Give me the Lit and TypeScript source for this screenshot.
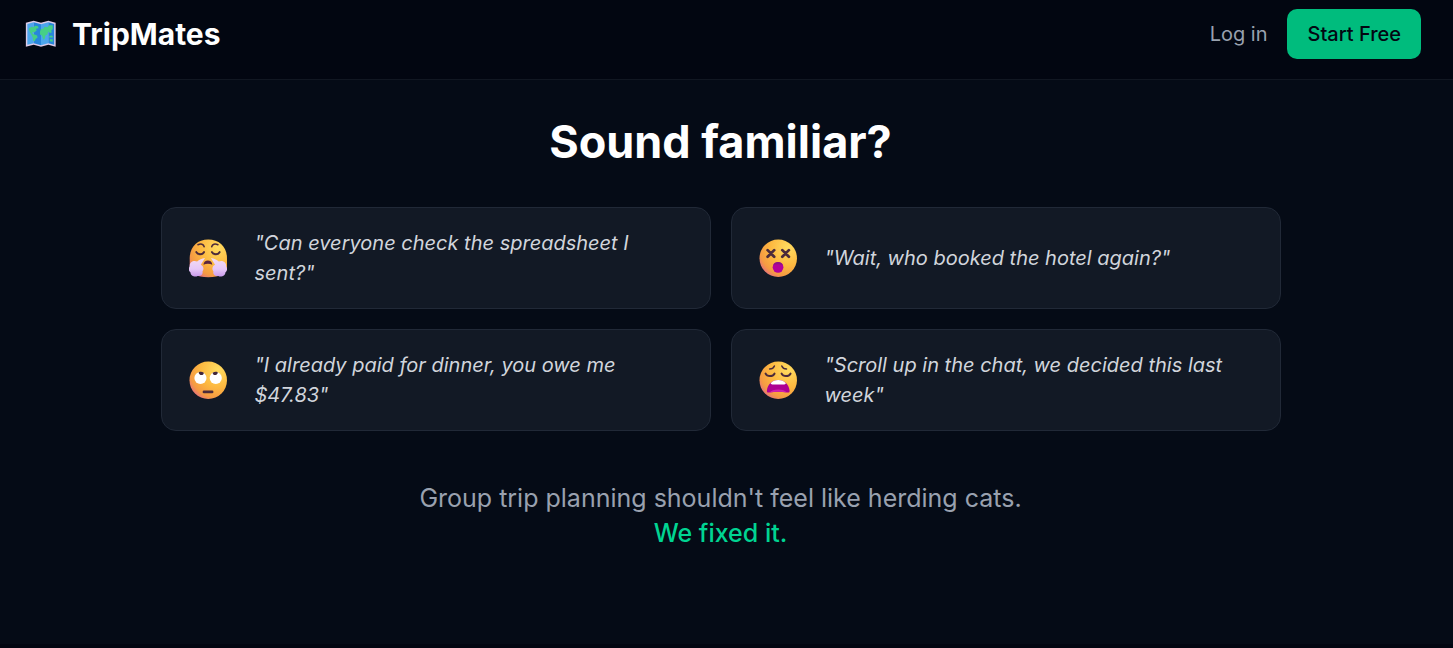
import { LitElement, html, css, svg } from "lit";
import { customElement, property } from "lit/decorators.js";

const faces = {
  huff: svg`
    <path d="M.7 19C.7 8 8 .5 19 .5S37.500 8 37.500 19v9c0 6.500-7 9.700-18.500 9.700S.7 34.500.7 28z" fill="url(#skin)"/>
    <path d="M8.800 5.700c3-1.300 5.500-.7 6.200 2M28.600 5.700c-3-1.300-5.500-.7-6.200 2" class="brow"/>
    <path d="M7.200 13c1.300 2.700 6 2.700 7.600 0M22.600 13c1.300 2.700 6 2.700 7.600 0" class="line"/>
    <path d="M14.300 25.500c0-5.600 8.700-5.600 8.700 0-2.500-1.500-6-1.500-8.700 0z" fill="#5b2540"/>
    <path d="M15.800 18.700c-3 .3-5.800 1.500-7.800 3.600C4.500 20.500.3 23 .7 27c-1.500 2.500-1 5 .8 6 0 3.500 4.500 5 7 3.500 3.500.5 5.500-2 4.800-4.500 2-2.500.7-5.500-1.600-6.500z" fill="url(#puff)"/>
    <path d="M21.600 18.700c3 .3 5.800 1.500 7.800 3.600 3.500-1.800 7.700.7 7.300 4.700 1.500 2.500 1 5-.8 6 0 3.500-4.500 5-7 3.500-3.500.5-5.500-2-4.800-4.500-2-2.500-.7-5.500 1.600-6.500z" fill="url(#puff)"/>`,
  dizzy: svg`
    <circle cx="19" cy="19" r="18.500" fill="url(#skin)"/>
    <path d="m8.500 11 6.500 6.500m0-6.500-6.500 6.500M23 11l6.500 6.500m0-6.500L23 17.500" class="cross"/>
    <circle cx="18.800" cy="28" r="5.300" fill="#b4009a"/>
    <path d="M14 26c1-4.300 8.600-4.300 9.600 0-3-1.300-6.600-1.300-9.600 0z" fill="#8d1188"/>`,
  roll: svg`
    <circle cx="19" cy="19" r="18.500" fill="url(#skin)"/>
    <circle cx="11.300" cy="16.800" r="6" fill="#fff"/>
    <circle cx="26.400" cy="16.800" r="6" fill="#fff"/>
    <path d="M9.600 11c1.800-.7 3.500-.5 5 .5.200 3.200-5.200 3-5-.5zM23.400 11.500c1.500-1 3.200-1.200 5-.5.200 3.500-5.200 3.700-5 .5z" fill="#41263c"/>
    <path d="M14.800 30.500h8" class="cross"/>`,
  weary: svg`
    <circle cx="19" cy="19" r="18.500" fill="url(#skin)"/>
    <path d="M10.500 8c2.200 0 3.900-1 4.700-3M22.500 5c.8 2 2.500 3 4.700 3" class="brow"/>
    <path d="M6.500 12.500c1.500 3.200 7 3.200 8.800 0M22.300 12.500c1.500 3.200 7 3.200 8.800 0" class="line"/>
    <path d="M7.800 29c.7-6 5-10.200 11.200-10.200S29.500 23 30.200 29c.2 1.700-.7 2.400-2 2.100-6-1-12.500-1-18.400 0-1.300.3-2.200-.4-2-2.100z" fill="#ad0092"/>
    <path d="M11.500 22c3.500-4.200 11.500-4.200 15 0-.5 1-1.300 1.300-2.300 1.300H13.800c-1 0-1.800-.3-2.300-1.300z" fill="#fff"/>
    <path d="M10.500 31c2.500-3.800 14.500-3.800 17 0-5.500-1-11.500-1-17 0z" fill="#cf1fb0"/>`,
};

@customElement("mood-face")
class MoodFace extends LitElement {
  @property() mood: keyof typeof faces = "huff";

  static styles = css`
    :host { display: flex; justify-content: center; width: 53px; flex: none; }
    svg { display: block; width: 39px; height: 39px; }
    .line, .brow, .cross { fill: none; stroke: #4c2b3b; stroke-linecap: round; }
    .line { stroke-width: 2; }
    .brow { stroke-width: 1.500; }
    .cross { stroke-width: 2.700; }
  `;

  render() {
    return html`<svg viewBox="0 0 38.500 38.500" aria-hidden="true">
      <defs>
        <radialGradient id="skin" cx=".76" cy=".22" r=".95">
          <stop offset="0" stop-color="#ffdc60"/>
          <stop offset=".5" stop-color="#fdb840"/>
          <stop offset=".8" stop-color="#f59a43"/>
          <stop offset="1" stop-color="#e0638f"/>
        </radialGradient>
        <linearGradient id="puff" x1="0" y1="0" x2="0" y2="1">
          <stop offset="0" stop-color="#f3dcf3"/>
          <stop offset=".6" stop-color="#e6c8f8"/>
          <stop offset="1" stop-color="#c99aeb"/>
        </linearGradient>
      </defs>
      ${faces[this.mood]}
    </svg>`;
  }
}

@customElement("app-root")
class AppRoot extends LitElement {
  private quotes = [
    { mood: "huff", text: "Can everyone check the spreadsheet I sent?" },
    { mood: "dizzy", text: "Wait, who booked the hotel again?" },
    { mood: "roll", text: "I already paid for dinner, you owe me $47.83" },
    { mood: "weary", text: "Scroll up in the chat, we decided this last week" },
  ];

  static styles = css`
    :host {
      display: flex;
      flex-direction: column;
      min-height: 100vh;
      background: #020611;
      color: #fff;
      font-family: Inter, "Liberation Sans", sans-serif;
      font-size: 20px;
      line-height: 30px;
    }
    * { box-sizing: border-box; margin: 0; }
    .bar {
      display: flex;
      align-items: center;
      justify-content: space-between;
      padding: 9px 32px 20px 20px;
      border-bottom: 1px solid #111722;
    }
    .brand { display: flex; align-items: center; gap: 10px; }
    .map { display: block; width: 42px; height: 28px; }
    .name { font-size: 30px; line-height: 40px; font-weight: 700; }
    .actions { display: flex; align-items: center; gap: 20px; }
    .login { color: #99a1af; text-decoration: none; }
    .start {
      padding: 10px 20px;
      border: 0;
      border-radius: 10px;
      background: #00bc7d;
      color: #030712;
      font: inherit;
      font-weight: 500;
    }
    .familiar {
      flex: 1;
      margin-bottom: 4px;
      padding: 37px 32px 0 20px;
      background: #050b16;
      text-align: center;
    }
    .title { font-size: 45px; line-height: 50px; font-weight: 700; }
    .quotes {
      display: grid;
      grid-template-columns: 1fr 1fr;
      gap: 20px;
      max-width: 1120px;
      margin: 40px auto 50px;
      padding: 0;
      list-style: none;
      text-align: left;
    }
    .quote {
      display: flex;
      align-items: center;
      gap: 20px;
      padding: 20px;
      border: 1px solid #212937;
      border-radius: 15px;
      background: #121925;
    }
    .words { color: #d1d5dc; font-style: oblique 14deg; }
    .closing { color: #99a1af; font-size: 25px; line-height: 35px; }
    .fixed { color: #00d492; font-weight: 500; }
  `;

  render() {
    return html`
      <header class="bar">
        <div class="brand">
          <svg class="map" viewBox="0 0 43 28" aria-hidden="true">
            <path d="M6 2.500 14 .5l7.500 2 7.500-2 7.500 2V27l-7.500-2-7.500 2-7.500-2L6 27z" fill="#dccbe8"/>
            <path d="m7.500 3.700 6.500-1.700v21.500l-6.500 1.600z" fill="#4ca6ed"/>
            <path d="m14 2 7.500 2v21.400L14 23.500z" fill="#2786dc"/>
            <path d="m21.500 4 7.500-2v21.500l-7.500 1.900z" fill="#4ca6ed"/>
            <path d="m29 2 6 1.700v21.400l-6-1.600z" fill="#2786dc"/>
            <path d="m9 8.500 2.500-2 2 .5 2-1.500 3 .5.500 2-2.500.5.500 2-2.500 2-2-.5.500 2 2 .5 2.500 1 .5 2-2 1.500-1 2.500-1.500-.5-.500-3.500-1.500-3-1.500-2.500zM20.500 11.500l1-2.500 2.500-.5 1-2 3 .5 2-2h3.500v4l-1.500 1.500.5 2-2 .5-1.500-1.500-1 3-2 1-.5 3-1.500 1.500-1.500-4.500-2-1zM30 16l2-.5 1.500.5v1.500H30zM30.500 19.500h3V22l-3-.5z" fill="#46cf86"/>
          </svg>
          <span class="name">TripMates</span>
        </div>
        <nav class="actions">
          <a class="login" href="#login">Log in</a>
          <button class="start" type="button">Start Free</button>
        </nav>
      </header>
      <main class="familiar">
        <h2 class="title">Sound familiar?</h2>
        <ul class="quotes">
          ${this.quotes.map(
            (q) => html`<li class="quote">
              <mood-face mood=${q.mood}></mood-face>
              <p class="words">${`"${q.text}"`}</p>
            </li>`
          )}
        </ul>
        <p class="closing">
          Group trip planning shouldn't feel like herding cats.<br />
          <span class="fixed">We fixed it.</span>
        </p>
      </main>
    `;
  }
}
